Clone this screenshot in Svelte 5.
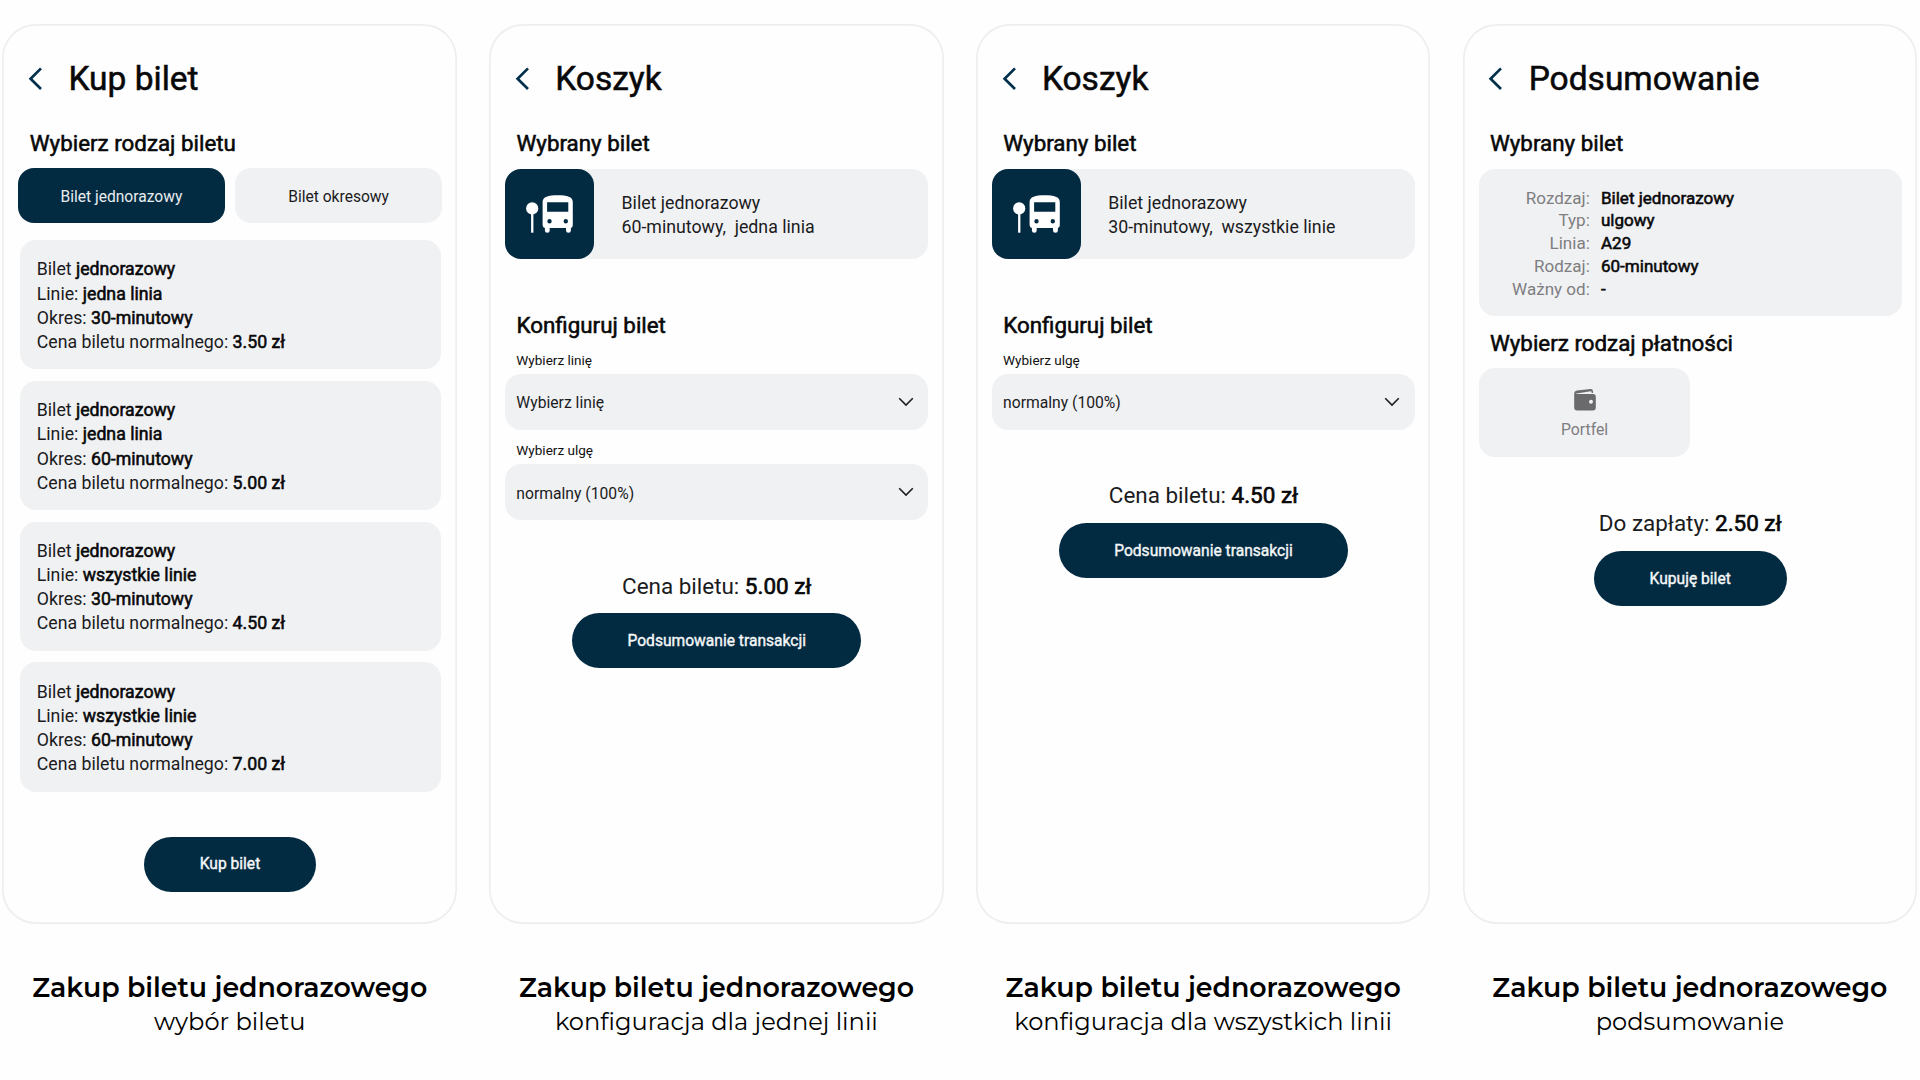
<script>
  const tickets = [
    { lines: 'jedna linia', period: '30-minutowy', price: '3.50 zł' },
    { lines: 'jedna linia', period: '60-minutowy', price: '5.00 zł' },
    { lines: 'wszystkie linie', period: '30-minutowy', price: '4.50 zł' },
    { lines: 'wszystkie linie', period: '60-minutowy', price: '7.00 zł' }
  ];

  const carts = [
    {
      details: '60-minutowy,\u00a0 jedna linia',
      fields: [
        { label: 'Wybierz linię', value: 'Wybierz linię' },
        { label: 'Wybierz ulgę', value: 'normalny (100%)' }
      ],
      price: '5.00 zł',
      caption: 'konfiguracja dla jednej linii'
    },
    {
      details: '30-minutowy,\u00a0 wszystkie linie',
      fields: [{ label: 'Wybierz ulgę', value: 'normalny (100%)' }],
      price: '4.50 zł',
      caption: 'konfiguracja dla wszystkich linii'
    }
  ];

  const summary = [
    ['Rozdzaj:', 'Bilet jednorazowy'],
    ['Typ:', 'ulgowy'],
    ['Linia:', 'A29'],
    ['Rodzaj:', '60-minutowy'],
    ['Ważny od:', '-']
  ];
</script>

{#snippet header(title)}
  <header class="bar">
    <svg class="back" viewBox="0 0 16 24" fill="none" stroke="#022f4b" stroke-width="2.7">
      <path d="M14 1.4 L3.6 11.7 L14 22" />
    </svg>
    <h1 class="strong">{title}</h1>
  </header>
{/snippet}

{#snippet caption(text)}
  <figcaption>
    <div class="cap-title">Zakup biletu jednorazowego</div>
    <div class="cap-sub">{text}</div>
  </figcaption>
{/snippet}

<main>
  <figure>
    <section class="phone">
      {@render header('Kup bilet')}
      <h2 class="strong">Wybierz rodzaj biletu</h2>
      <div class="tabs">
        <button class="tab active">Bilet jednorazowy</button>
        <button class="tab">Bilet okresowy</button>
      </div>
      <div class="tickets">
        {#each tickets as t}
          <div class="ticket">
            <div>Bilet <b>jednorazowy</b></div>
            <div>Linie: <b>{t.lines}</b></div>
            <div>Okres: <b>{t.period}</b></div>
            <div>Cena biletu normalnego: <b>{t.price}</b></div>
          </div>
        {/each}
      </div>
      <button class="cta buy">Kup bilet</button>
    </section>
    {@render caption('wybór biletu')}
  </figure>

  {#each carts as cart}
    <figure>
      <section class="phone">
        {@render header('Koszyk')}
        <h2 class="strong">Wybrany bilet</h2>
        <div class="selected">
          <div class="tile">
            <svg viewBox="0 0 48 40" fill="#fff">
              <circle cx="6.2" cy="14.4" r="6.1" />
              <rect x="5.1" y="18" width="2.3" height="20.7" />
              <path
                fill-rule="evenodd"
                d="M16.6 8.3 C16.6 2.7 22.3 1.3 31.7 1.3 C41.1 1.3 46.8 2.7 46.8 8.3 V30.3 Q46.8 33.7 44.9 34 V36.5 Q44.9 38.7 42.5 38.7 Q40 38.7 40 36.5 V34 H23.7 V36.5 Q23.7 38.7 21.3 38.7 Q18.9 38.7 18.9 36.5 V34 Q16.6 33.7 16.6 30.3 Z M21.1 8.3 V17.7 H42.3 V8.3 Z M23.5 25 A2.2 2.2 0 1 0 23.5 29.4 A2.2 2.2 0 1 0 23.5 25 Z M39.8 25 A2.2 2.2 0 1 0 39.8 29.4 A2.2 2.2 0 1 0 39.8 25 Z"
              />
            </svg>
          </div>
          <div class="info">
            <div>Bilet jednorazowy</div>
            <div>{cart.details}</div>
          </div>
        </div>
        <h2 class="strong config">Konfiguruj bilet</h2>
        {#each cart.fields as f}
          <div class="field">
            <div class="label">{f.label}</div>
            <div class="select">
              <span>{f.value}</span>
              <svg class="down" viewBox="0 0 16 10" fill="none" stroke="#1f1f21" stroke-width="1.6">
                <path d="M1.2 1.3 L8 8.1 L14.8 1.3" />
              </svg>
            </div>
          </div>
        {/each}
        <div class="price">Cena biletu: <b>{cart.price}</b></div>
        <button class="cta next">Podsumowanie transakcji</button>
      </section>
      {@render caption(cart.caption)}
    </figure>
  {/each}

  <figure>
    <section class="phone">
      {@render header('Podsumowanie')}
      <h2 class="strong">Wybrany bilet</h2>
      <dl>
        {#each summary as [k, v]}
          <dt>{k}</dt>
          <dd class="strong">{v}</dd>
        {/each}
      </dl>
      <h2 class="strong pay">Wybierz rodzaj płatności</h2>
      <div class="wallet">
        <svg viewBox="0 0 22 22" fill="#6a6a6c">
          <path d="M0.2 5.2 Q0.2 2 3 1.6 L16.6 0.1 Q19 0 19 2.4 V4.1 H17.7 L17.6 2.9 Q17.5 2.2 16.8 2.3 L2.6 4.6 Q1.9 4.8 2 5 H18.9 Q21.8 5 21.8 7.8 V18.6 Q21.8 21.5 18.9 21.5 H3.1 Q0.2 21.5 0.2 18.6 Z" />
          <circle cx="17" cy="12.7" r="2" fill="#f0f1f3" />
        </svg>
        <span>Portfel</span>
      </div>
      <div class="price due">Do zapłaty: <b>2.50 zł</b></div>
      <button class="cta pay-now">Kupuję bilet</button>
    </section>
    {@render caption('podsumowanie')}
  </figure>
</main>

<style>
  :global(body) {
    background: #fefefe;
  }
  main {
    display: flex;
    gap: 32.15px;
    box-sizing: border-box;
    width: 1920px;
    height: 1080px;
    padding: 24px 0 0 2.4px;
    overflow: hidden;
    font-family: Roboto, sans-serif;
    color: #1b1b1d;
    white-space: nowrap;
  }
  figure {
    flex: none;
    width: 454.6px;
    margin: 0;
  }
  .phone {
    display: flex;
    flex-direction: column;
    box-sizing: border-box;
    height: 899.7px;
    padding: 35px 15.6px 0 16.2px;
    border-radius: 34px;
    box-shadow: inset 0 0 0 1.7px #eeeeef;
  }
  .strong,
  b {
    font-weight: 400;
    color: #080809;
    -webkit-text-stroke: 0.55px currentColor;
  }
  .bar {
    display: flex;
    align-items: center;
    height: 40px;
    padding-left: 8.5px;
  }
  .back {
    width: 16px;
    height: 24px;
  }
  h1 {
    margin: 0 0 0 25.4px;
    font-size: 33.5px;
    line-height: 40px;
    -webkit-text-stroke-width: 0.9px;
  }
  h2 {
    margin: 30.2px 0 0 11.2px;
    font-size: 22.35px;
    line-height: 28px;
    -webkit-text-stroke-width: 0.65px;
  }
  button {
    border: 0;
    padding: 1.6px 0 0;
    font: 400 15.6px Roboto, sans-serif;
  }
  .tabs {
    display: grid;
    grid-template-columns: 206.6px 206.2px;
    gap: 10.8px;
    height: 55px;
    margin: 11.2px 0 0 -0.5px;
  }
  .tab {
    padding-top: 2.4px;
    border-radius: 16px;
    background: #f0f1f3;
    color: #1b1b1d;
  }
  .active {
    background: #022b42;
    color: #e9edf0;
  }
  .tickets {
    display: grid;
    gap: 11.2px;
    margin: 16.4px 0 0 1.8px;
  }
  .ticket {
    box-sizing: border-box;
    height: 129.7px;
    padding: 17.7px 0 0 16.4px;
    border-radius: 16px;
    background: #f0f1f3;
    font-size: 17.72px;
    line-height: 24.1px;
  }
  .cta {
    align-self: center;
    height: 55px;
    border-radius: 27.5px;
    background: #022b42;
    color: #f4f6f7;
    -webkit-text-stroke: 0.4px currentColor;
  }
  .buy {
    width: 171.4px;
    margin-top: 44.7px;
    padding-top: 0.4px;
  }
  .selected {
    display: flex;
    height: 90px;
    margin-top: 11.8px;
    border-radius: 16px;
    background: #f0f1f3;
  }
  .tile {
    display: flex;
    align-items: center;
    justify-content: center;
    width: 89px;
    border-radius: 16px;
    background: #022b42;
  }
  .tile svg {
    width: 48px;
    height: 40px;
  }
  .info {
    padding: 21.9px 0 0 27.2px;
    font-size: 17.75px;
    line-height: 24.1px;
  }
  .config {
    margin-top: 51.9px;
  }
  .field {
    margin-top: 10.4px;
  }
  .config + .field {
    margin-top: 11.4px;
  }
  .label {
    margin-left: 11px;
    color: #111;
    font-size: 13.55px;
    line-height: 20px;
  }
  .select {
    display: flex;
    align-items: center;
    justify-content: space-between;
    box-sizing: border-box;
    height: 55.6px;
    margin-top: 4.1px;
    padding: 0 14.4px 0 11px;
    border-radius: 16px;
    background: #f0f1f3;
    font-size: 15.7px;
  }
  .select span {
    padding-top: 1.6px;
  }
  .down {
    width: 16px;
    height: 10px;
  }
  .price {
    margin-top: 51.5px;
    font-size: 22.45px;
    line-height: 28px;
    text-align: center;
  }
  .price b {
    -webkit-text-stroke-width: 0.65px;
  }
  .next {
    width: 289px;
    margin-top: 13.4px;
  }
  dl {
    display: grid;
    grid-template-columns: 111px 1fr;
    column-gap: 11.2px;
    align-content: start;
    box-sizing: border-box;
    height: 147px;
    margin: 11.8px 0 0;
    padding-top: 17.6px;
    border-radius: 16px;
    background: #f0f1f3;
    font-size: 17.05px;
    line-height: 22.9px;
  }
  dt {
    color: #7e7e81;
    text-align: right;
  }
  dd {
    margin: 0;
  }
  .pay {
    margin-top: 13.5px;
  }
  .wallet {
    display: flex;
    flex-direction: column;
    align-items: center;
    box-sizing: border-box;
    width: 211.5px;
    height: 88.8px;
    margin-top: 10.9px;
    padding-top: 20.8px;
    border-radius: 16px;
    background: #f0f1f3;
    color: #7e7e81;
    font-size: 15.8px;
    line-height: 20px;
  }
  .wallet svg {
    width: 22px;
    height: 22px;
    margin-bottom: 9.2px;
  }
  .due {
    margin-top: 51.9px;
  }
  .pay-now {
    width: 193px;
    margin-top: 13.5px;
  }
  figcaption {
    padding-top: 47.4px;
    color: #000;
    font-family: Montserrat, Inter, sans-serif;
    text-align: center;
  }
  .cap-title {
    font-size: 26.8px;
    font-weight: 600;
    line-height: 34px;
  }
  .cap-sub {
    font-size: 24.1px;
    font-weight: 400;
    line-height: 34px;
  }
</style>
